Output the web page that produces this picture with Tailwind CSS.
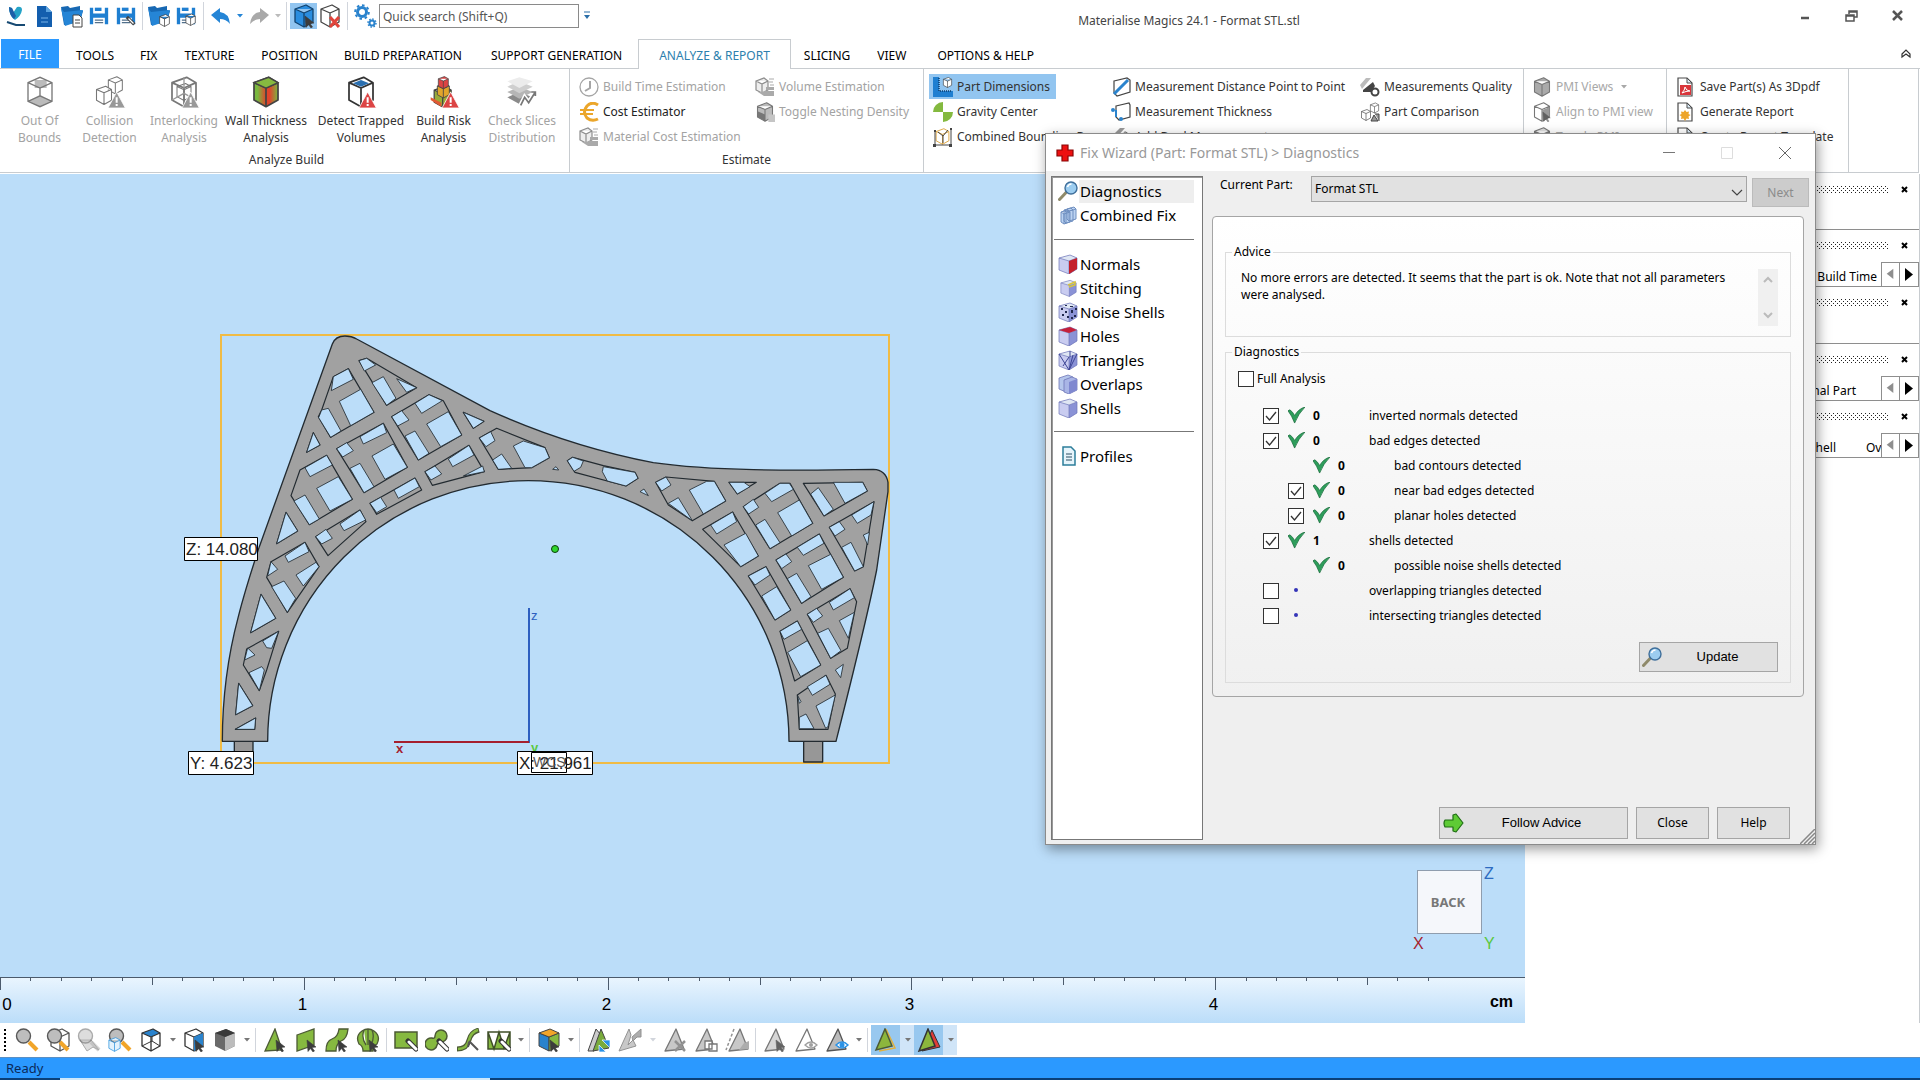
<!DOCTYPE html>
<html lang="en">

<head>
    <meta charset="UTF-8">
    <title>Materialise Magics 24.1 - Format STL.stl</title>
    <script src="https://cdn.jsdelivr.net/npm/@tailwindcss/browser@4"></script>
</head>

<body class="font-['Noto_Sans',sans-serif] text-xs text-[#222]">

    <!-- Icon sprite -->
    <svg width="0" height="0" class="absolute">
        <defs>
            <linearGradient id="green" x1="0" x2="1"><stop offset=".15" stop-color="#7ab83f" /><stop offset=".5" stop-color="#e0442c" /><stop offset=".65" stop-color="#e0442c" /><stop offset="1" stop-color="#7ab83f" /></linearGradient>
            <pattern id="dots" width="4" height="4" patternUnits="userSpaceOnUse"><path d="M0 0h1v1h-1zM2 2h1v1h-1z" fill="#222" /></pattern>
            <symbol id="cursor" viewBox="0 0 24 24"><path d="M13 12l9 7-4 .5 2.500 3.500-1.500 1-2.500-3.500-2.500 3z" fill="#3c3c3c" stroke="#3c3c3c" stroke-width=".6" /></symbol>
            <symbol id="warn" viewBox="0 0 24 24"><path d="M17 12l6.500 12h-13z" fill="currentColor" stroke="#fff" stroke-width=".6" /><path d="M17 16v4M17 21v1.500" stroke="#fff" stroke-width="1.500" /></symbol>
            <symbol id="wire" viewBox="0 0 24 24"><path d="M3 5l11-4 7 4v13l-9 5-9-5zM3 5l9 4 9-4M12 9v14" stroke="currentColor" stroke-width="1.300" stroke-linejoin="round" /></symbol>
            <symbol id="save" viewBox="0 0 24 24"><path d="M1 2h4v7h14V2h4v20h-4v-8H5v8H1z" fill="#1f7fd1" /><path d="M7 2h8v4H7z" fill="#1f7fd1" /><path d="M7 17h10M7 20h10" stroke="#52708c" stroke-width="1.500" /></symbol>
            <symbol id="folder" viewBox="0 0 24 24"><path d="M1 3l7-1 2 2 10-2v4l3 1-3 11-16 3z" fill="#1768b3" /><path d="M1 4l3 4 19-2-3 11-15 5z" fill="#2585d6" /></symbol>
            <symbol id="lens" viewBox="0 0 24 24"><path d="M14 14l8 8" stroke="#f1a529" stroke-width="4" /><circle cx="8.500" cy="8" r="7" fill="#bdbdbd" stroke="#585858" stroke-width="1.400" /></symbol>
            <symbol id="tri" viewBox="0 0 24 24"><path d="M13 1l8 20-19 2z" stroke="#555" stroke-width="1.300" stroke-linejoin="round" /></symbol>
            <symbol id="pen" viewBox="0 0 24 24"><path d="M14 13l8 8" stroke="#333" stroke-width="5" stroke-linecap="round" /><path d="M15 14l7 7" stroke="#fff" stroke-width="3" stroke-linecap="round" /></symbol>
            <symbol id="vbox" viewBox="0 0 20 20"><path d="M1 4l11-3 7 3v11l-8 5-10-4z" fill="#c9ccf0" /><path d="M11 7l8-3v11l-8 5z" fill="#8a92d6" /><path d="M1 4l11-3 7 3-8 3z" fill="#dfe6f3" /><path d="M1 4l11-3 7 3v11l-8 5-10-4zM1 4l10 3 8-3M11 7v13" fill="none" stroke="#6f76b8" stroke-width=".7" /></symbol>
            <symbol id="ok" viewBox="0 0 18 18"><path d="M0 4l2-1q3 2 5 6Q11 2 18 0 11 7 7 17 4 9 0 4z" fill="#2e9e5b" stroke="#1c6e3e" stroke-width=".8" /></symbol>
            <symbol id="tick" viewBox="0 0 16 16"><path d="M3 8l3.500 4L13 4" fill="none" stroke="#333" stroke-width="1.300" /></symbol>
            <symbol id="down" viewBox="0 0 12 6"><path d="M4 1h6L7 4.500z" fill="currentColor" /></symbol>
            <symbol id="qbox" viewBox="0 0 20 20"><path d="M1 4l8-3 4 3v9l-6 3-6-3zM1 4l6 3 6-3M7 7v9" fill="#eee" stroke="#8d8d8d" stroke-width="1.200" /><path d="M11 10h8v3h-8zM9 14h10v5H9zM3 15l6 4v-4z" fill="#aaa" /><path d="M14 2h5M14 5h4M15 8h4" stroke="#aaa" /></symbol>
            <symbol id="page" viewBox="0 0 20 20"><path d="M3 1h9l5 5v13H3z" fill="#fff" stroke="#4a4a4a" stroke-width="1.200" /><path d="M12 1v5h5z" fill="#dcecf8" stroke="#4a4a4a" /></symbol>
            <symbol id="magnify" viewBox="0 0 20 20"><path d="M1.500 18.500l7-7.500" stroke="#8f8a6a" stroke-width="3" stroke-linecap="round" /><circle cx="13" cy="7" r="6" fill="#9ccdf0" stroke="#3f6f9b" stroke-width="1.400" /><path d="M9.500 6q1-3 4-3" stroke="#fff" fill="none" stroke-width="1.500" /></symbol>
        </defs>
    </svg>

    <div class="relative flex h-screen flex-col overflow-hidden bg-white">

        <!-- Title bar -->
        <header class="relative flex h-[39px] shrink-0 items-start pt-1">
            <div class="flex h-6 items-center pl-1">
                <svg class="mr-1 size-6" viewBox="0 0 24 24" fill="none"><path d="M5 3l3 1 1 5 4-6q5-1 5 3-1 6-7 10-6-4-6-13z" fill="#25a3c7" /><path d="M5 3q0 8 5 12l2-3-4-8z" fill="#1d5fa8" /><path d="M3 18l9 3h9" stroke="#174a73" stroke-width="2" /></svg>
                <button aria-label="New" class="mr-1 size-6"><svg viewBox="0 0 24 24"><path d="M5 2h9l6 6v15H5z" fill="#135eae" /><path d="M14 2v6h6z" fill="#5ba3e0" /><path d="M9 14h7M9 18h7" stroke="#78b2e8" /></svg></button>
                <button aria-label="Open" class="mr-[3px] size-6"><svg viewBox="0 0 24 24"><use href="#folder" /><path d="M13 11h6l3 3v9h-9z" fill="#fff" stroke="#444" /><path d="M15 16h5M15 19h5" stroke="#444" /></svg></button>
                <button aria-label="Save" class="mr-[3px] size-6 p-[2px]"><svg viewBox="0 0 24 24"><use href="#save" /></svg></button>
                <button aria-label="Save as" class="size-6 p-[2px]"><svg viewBox="0 0 24 24"><use href="#save" /><path d="M13 13l9 9" stroke="#444" stroke-width="4" /><path d="M15 15l6 6" stroke="#fff" stroke-width="1.500" /></svg></button>
                <span class="mx-1 h-7 w-px bg-gray-300"></span>
                <button aria-label="Open project" class="mr-[3px] size-6"><svg viewBox="0 0 24 24" fill="#fff"><use href="#folder" /><g class="text-[#333]"><use href="#wire" x="11" y="10" width="13" height="13" /></g></svg></button>
                <button aria-label="Save project" class="size-6 p-[2px]"><svg viewBox="0 0 24 24" fill="#fff"><use href="#save" /><g class="text-[#333]"><use href="#wire" x="10" y="9" width="15" height="15" /></g></svg></button>
                <span class="mx-[5px] h-7 w-px bg-gray-300"></span>
                <button aria-label="Undo" class="size-6"><svg viewBox="0 0 24 24"><path d="M2 11l9-7v4q9 1 10 12-4-5-10-5v4z" fill="#2585d6" /></svg></button>
                <svg class="h-2 w-3 text-[#2585d6]"><use href="#down" /></svg>
                <button aria-label="Redo" class="ml-[2px] size-6"><svg viewBox="0 0 24 24"><path d="M22 11l-9-7v4Q4 9 3 20q4-5 10-5v4z" fill="#a9a9a9" /></svg></button>
                <svg class="h-2 w-3 text-[#bbb]"><use href="#down" /></svg>
                <span class="mx-[3px] h-7 w-px bg-gray-300"></span>
                <button aria-label="Select" class="flex h-[26px] w-[27px] items-center justify-center bg-[#92c5f0]"><svg class="size-6 text-[#12436f]" viewBox="0 0 24 24" fill="#2a8ddf"><use href="#wire" /><use href="#cursor" /></svg></button>
                <button aria-label="Unselect" class="ml-px size-6"><svg class="text-[#444]" viewBox="0 0 24 24" fill="#fff"><use href="#wire" /><path d="M12 13l9 10M21 13l-9 10" stroke="#e1443b" stroke-width="3" /></svg></button>
                <span class="mx-[5px] h-7 w-px bg-gray-300"></span>
                <button aria-label="Settings" class="mr-[2px] size-6"><svg viewBox="0 0 24 24" fill="none" stroke="#2a83cd"><circle cx="9" cy="8" r="4.500" stroke-width="3" /><circle cx="9" cy="8" r="6.800" stroke-width="2" stroke-dasharray="2.600 2.700" /><circle cx="19" cy="19" r="2.500" stroke-width="2" /><circle cx="19" cy="19" r="4" stroke-width="1.500" stroke-dasharray="1.500 1.600" /></svg></button>
                <input type="text" aria-label="Quick search" placeholder="Quick search (Shift+Q)" class="h-6 w-[200px] border border-[#8a8a8a] bg-white px-[3px] text-xs placeholder:text-[#555]">
                <svg class="ml-[2px] h-3 w-3" viewBox="0 0 12 12"><path d="M3 2h6" stroke="#2a6ea8" /><path d="M3 5h6L6 9z" fill="#2a6ea8" /></svg>
            </div>
            <h1 class="absolute inset-x-0 top-3 ml-[458px] text-center text-xs leading-[18px] text-[#444]">Materialise Magics 24.1 - Format STL.stl</h1>
            <div class="absolute top-1 right-[11px] flex gap-[22px] text-[#555]">
                <button aria-label="Minimize" class="size-6"><svg viewBox="0 0 24 24"><path d="M8 14h8" stroke="currentColor" stroke-width="2.500" /></svg></button>
                <button aria-label="Restore" class="size-6"><svg viewBox="0 0 24 24" fill="none" stroke="currentColor" stroke-width="1.500"><path d="M10 10V7h8v6h-3M7 11h8v6H7zM7 12h8M10 8h8" /></svg></button>
                <button aria-label="Close window" class="size-6"><svg viewBox="0 0 24 24"><path d="M8 7l9 9M17 7l-9 9" stroke="currentColor" stroke-width="2.500" /></svg></button>
            </div>
        </header>

        <!-- Ribbon tabs -->
        <nav class="flex h-[30px] shrink-0 items-stretch border-b border-[#c8ccd0] text-xs text-black">
            <a href="#" class="ml-px flex w-[58px] items-center justify-center bg-[#2b99ff] pt-[2px] text-white">FILE</a>
            <a href="#" class="ml-1 flex items-center px-[13px] pt-1">TOOLS</a>
            <a href="#" class="flex items-center px-[13px] pt-1">FIX</a>
            <a href="#" class="flex items-center px-[14px] pt-1">TEXTURE</a>
            <a href="#" class="flex items-center px-[13px] pt-1">POSITION</a>
            <a href="#" class="flex items-center px-[13px] pt-1">BUILD PREPARATION</a>
            <a href="#" class="flex items-center px-4 pt-1">SUPPORT GENERATION</a>
            <a href="#" class="-mb-px flex items-center border border-b-0 border-[#c8ccd0] bg-white px-5 pt-[3px] text-[#2d7fae]">ANALYZE &amp; REPORT</a>
            <a href="#" class="flex items-center px-[13px] pt-1">SLICING</a>
            <a href="#" class="flex items-center px-[14px] pt-1">VIEW</a>
            <a href="#" class="flex items-center px-[17px] pt-1">OPTIONS &amp; HELP</a>
            <button aria-label="Collapse ribbon" class="mr-[6px] ml-auto size-4 self-center"><svg viewBox="0 0 16 16" fill="none" stroke="#333" stroke-width="1.200"><path d="M4 8l4-4 4 4v3l-4-3-4 3z" /></svg></button>
        </nav>

        <!-- Ribbon -->
        <section class="mr-px flex h-[104px] shrink-0 border-r border-b border-[#c8ccd0] text-[#333]">
            <div class="flex w-[570px] shrink-0 flex-col border-r border-[#c8ccd0] pt-[7px] text-center leading-[17px]">
                <div class="flex pl-[7px]">
                    <button disabled class="flex w-[65px] flex-col items-center text-[#a3a3a3]"><svg class="mb-1 size-8 text-[#666]" viewBox="0 0 24 24" fill="none"><path d="M8 3h9v6H8z" fill="#bbb" /><path d="M3 19l9-5 9 5-9 4z" fill="#bbb" /><path d="M3 5l9-4 9 4v14l-9 4-9-4zM3 5l9 4 9-4M12 9v6M3 19l9-4 9 4" stroke="#777" /></svg>Out Of<br>Bounds</button>
                    <button disabled class="flex w-[75px] flex-col items-center text-[#a3a3a3]"><svg class="mb-1 size-8 text-[#777]" viewBox="0 0 24 24" fill="#fff"><use href="#wire" x="9" y="0" width="14" height="14" /><use href="#wire" x="0" y="7" width="15" height="15" /><g class="text-[#999]"><use href="#warn" /></g></svg>Collision<br>Detection</button>
                    <button disabled class="flex w-[74px] flex-col items-center text-[#a3a3a3]"><svg class="mb-1 size-8 text-[#777]" viewBox="0 0 24 24" fill="none"><use href="#wire" /><use href="#wire" x="5" y="5" width="14" height="14" /><path d="M12 1v8M3 18l9-5 9 5" stroke="#999" /><g class="text-[#999]"><use href="#warn" /></g></svg>Interlocking<br>Analysis</button>
                    <button class="flex w-[90px] flex-col items-center"><svg class="mb-1 size-8 text-[#444]" viewBox="0 0 24 24" fill="url(#green)"><use href="#wire" /><path d="M3 5l11-4 7 4-9 4z" fill="#86b940" stroke="#444" /></svg>Wall Thickness<br>Analysis</button>
                    <button class="flex w-[100px] flex-col items-center"><svg class="mb-1 size-8 text-[#333]" viewBox="0 0 24 24" fill="#fff"><use href="#wire" /><path d="M6 5.500l6-2.500 6 2.500-6 2.500z" fill="#2a6fb0" /><g class="text-[#dc4444]"><use href="#warn" /></g></svg>Detect Trapped<br>Volumes</button>
                    <button class="flex w-[65px] flex-col items-center"><svg class="mb-1 size-8 text-[#444]" viewBox="0 0 24 24"><g fill="#9aab38"><use href="#wire" x="-1" y="7" width="24" height="17" /></g><g fill="#e2a52b"><use href="#wire" x="3" y="5" width="17" height="12" /></g><g fill="#dc4444"><use href="#wire" x="6" y="0" width="11" height="10" /></g><path d="M2 18l8 5v-3l-8-4z" fill="#e05a33" /><g class="text-[#dc4444]"><use href="#warn" /></g></svg>Build Risk<br>Analysis</button>
                    <button disabled class="flex w-[92px] flex-col items-center text-[#a3a3a3]"><svg class="mb-1 size-8" viewBox="0 0 24 24"><path d="M1 16l9-4 10 4-10 5z" fill="#8a8a8a" /><path d="M1 12l9-4 10 4-10 5z" fill="#b5b5b5" /><path d="M1 8l9-4 10 4-10 5z" fill="#cfcfcf" /><path d="M1 4l9-3 10 3-10 5z" fill="#ececec" /><path d="M11 22l3-6 3 4 5-8" stroke="#fff" stroke-width="3.500" fill="none" /><path d="M11 22l3-6 3 4 5-8M19 12h3v3" stroke="#777" fill="none" stroke-width="1.300" /></svg>Check Slices<br>Distribution</button>
                </div>
                <h2 class="mt-[5px] pl-1">Analyze Build</h2>
            </div>

            <div class="flex w-[354px] shrink-0 flex-col border-r border-[#c8ccd0] pt-[5px] text-[#a3a3a3]">
                <div class="flex pl-[9px]">
                    <div class="flex w-[176px] flex-col">
                        <button disabled class="flex h-[25px] items-center gap-1 whitespace-nowrap"><svg class="size-5" viewBox="0 0 20 20" fill="none" stroke="#a5a5a5" stroke-width="1.300"><circle cx="10" cy="10" r="9" /><path d="M11 4v7l-5 3" stroke-width="2" /></svg>Build Time Estimation</button>
                        <button class="flex h-[25px] items-center gap-1 whitespace-nowrap text-[#222]"><svg class="size-5" viewBox="0 0 20 20" fill="none" stroke="#eba62b" stroke-width="3"><path d="M19 3Q13-1 8 4q-5 6 0 12 5 4 11 1" /><path d="M1 8h14M1 12h13" stroke-width="2" /></svg>Cost Estimator</button>
                        <button disabled class="flex h-[25px] items-center gap-1 whitespace-nowrap"><svg class="size-5"><use href="#qbox" /></svg>Material Cost Estimation</button>
                    </div>
                    <div class="flex flex-col">
                        <button disabled class="flex h-[25px] items-center gap-1 whitespace-nowrap"><svg class="size-5"><use href="#qbox" /></svg>Volume Estimation</button>
                        <button disabled class="flex h-[25px] items-center gap-1 whitespace-nowrap"><svg class="size-5 text-[#777]" viewBox="0 0 24 24" fill="#bbb"><use href="#wire" /><path d="M3 11l9 4v8l-9-5z" fill="#777" /><path d="M16 15h8v9h-8z" fill="#c5c5c5" /></svg>Toggle Nesting Density</button>
                    </div>
                </div>
                <h2 class="mt-[2px] text-center leading-[17px] text-[#333]">Estimate</h2>
            </div>

            <div class="flex w-[600px] shrink-0 border-r border-[#c8ccd0] pt-[5px] pl-[5px]">
                <div class="flex w-[178px] flex-col items-start">
                    <button class="flex h-[25px] items-center gap-1 bg-[#92c5f0] pr-[6px] pl-1 whitespace-nowrap"><svg class="size-5" viewBox="0 0 20 20" fill="#fff"><path d="M0 0h6v14h14v6H0z" fill="#1f7fd1" /><path d="M6 1v13h13" stroke="#0d3d6b" stroke-width="1.500" stroke-dasharray="1 1" fill="none" /><g class="text-[#333]"><use href="#wire" x="9" y="0" width="11" height="11" /></g></svg>Part Dimensions</button>
                    <button class="flex h-[25px] items-center gap-1 pl-1 whitespace-nowrap"><svg class="size-5" viewBox="0 0 20 20" fill="#84b93f"><path d="M10 0v10H0A10 10 0 0 1 10 0zM10 10h10a10 10 0 0 1-10 10z" transform="matrix(-1 0 0 1 20 0) rotate(90 10 10)" /></svg>Gravity Center</button>
                    <button class="flex h-[25px] items-center gap-1 pl-1 whitespace-nowrap"><svg class="size-5 text-[#dba23c]" viewBox="0 0 20 20" fill="none"><use href="#wire" x="1" y="1" width="17" height="17" /><path d="M2 18V4M2 18h16M18 18V2M5 5l5 4 5-6M10 9v7" stroke="#444" /><path d="M0 17h3v3H0zM16 17h3v3h-3zM17 1h2v2h-2zM1 3h2v2H1z" fill="#444" /></svg>Combined Bounding Box</button>
                </div>
                <div class="flex w-[249px] flex-col items-start pl-1">
                    <button class="flex h-[25px] items-center gap-1 whitespace-nowrap"><svg class="size-5" viewBox="0 0 20 20" fill="none"><path d="M3 4l13-3 3 2v12L6 19l-3-3z" fill="#fff" stroke="#444" stroke-width="1.200" /><path d="M3 17L17 3" stroke="#2a83cd" stroke-width="3" /></svg>Measurement Distance Point to Point</button>
                    <button class="flex h-[25px] items-center gap-1 whitespace-nowrap"><svg class="size-5" viewBox="0 0 20 20" fill="none"><path d="M5 4l13-3 1 2v12L8 18l-3-3z" fill="#fff" stroke="#444" stroke-width="1.200" /><path d="M5 8v7" stroke="#2a83cd" stroke-width="2" /><circle cx="2" cy="8" r="2" fill="#2a83cd" /><circle cx="10" cy="17" r="2" fill="#2a83cd" /></svg>Measurement Thickness</button>
                    <button class="flex h-[25px] items-center gap-1 whitespace-nowrap"><svg class="size-5" viewBox="0 0 20 20"><path d="M1 9L9 1h5L3 13zM5 14l9-10 3 2-8 11z" fill="#999" /><path d="M16 5l-7 8 8 4z" fill="#444" /></svg>Add Dual Measurement</button>
                </div>
                <div class="flex flex-col items-start pl-1">
                    <button class="flex h-[25px] items-center gap-1 whitespace-nowrap"><svg class="size-5" viewBox="0 0 20 20"><path d="M0 8L6 1h5L2 12z" fill="#bbb" /><path d="M3 13L13 5l2 4-4 6H3z" fill="#444" /><circle cx="15" cy="15" r="3.500" fill="#fff" stroke="#444" stroke-width="2" /></svg>Measurements Quality</button>
                    <button class="flex h-[25px] items-center gap-1 whitespace-nowrap"><svg class="size-5 text-[#444]" viewBox="0 0 20 20" fill="#fff"><use href="#wire" x="9" y="0" width="11" height="12" /><use href="#wire" x="0" y="7" width="12" height="12" /><path d="M11 19l3-6 4 6zM15 12h4v7" stroke="#444" fill="#999" /></svg>Part Comparison</button>
                </div>
            </div>

            <div class="flex w-[143px] shrink-0 flex-col items-start border-r border-[#c8ccd0] pt-[5px] pl-2 text-[#a8a8a8]">
                <button disabled class="flex h-[25px] items-center gap-1 whitespace-nowrap"><svg class="size-5 text-[#777]" viewBox="0 0 24 24" fill="#aaa"><use href="#wire" /></svg>PMI Views <svg class="h-2 w-3"><use href="#down" /></svg></button>
                <button disabled class="flex h-[25px] items-center gap-1 whitespace-nowrap"><svg class="size-5 text-[#777]" viewBox="0 0 24 24" fill="#fff"><use href="#wire" /><path d="M12 10l9-4v12l-9 5z" fill="#999" /><use href="#cursor" opacity=".6" /></svg>Align to PMI view</button>
                <button disabled class="flex h-[25px] items-center gap-1 whitespace-nowrap"><svg class="size-5 text-[#777]" viewBox="0 0 24 24" fill="#ddd"><use href="#wire" /></svg>Toggle PMI</button>
            </div>

            <div class="flex w-[182px] shrink-0 flex-col items-start border-r border-[#c8ccd0] pt-[5px] pl-2">
                <button class="flex h-[25px] items-center gap-[5px] whitespace-nowrap"><svg class="size-5" viewBox="0 0 20 20"><use href="#page" /><path d="M5 8h11v10H5z" fill="#d9363b" /><path d="M7 16q3-3 3-6 1 4 5 4-4 0-8 2" stroke="#fff" fill="none" /></svg>Save Part(s) As 3Dpdf</button>
                <button class="flex h-[25px] items-center gap-[5px] whitespace-nowrap"><svg class="size-5" viewBox="0 0 20 20"><use href="#page" /><path d="M10 8l1.500 2 2.500-.500-.500 2.500 2 1-2 1.500.500 2.500-2.500-.500L10 19l-1.500-2.500-2.500.500.500-2.500-2-1.500 2-1L6 9.500l2.500.500z" fill="#eda52a" /></svg>Generate Report</button>
                <button class="flex h-[25px] items-center gap-[5px] whitespace-nowrap"><svg class="size-5"><use href="#page" /></svg>Create Report Template</button>
            </div>
        </section>

        <!-- Workspace -->
        <div class="mt-px flex min-h-0 flex-1">
            <main class="relative flex min-w-0 flex-1 flex-col bg-[#bbddf9]">
                <svg class="min-h-0 w-full flex-1 font-['Liberation_Sans',sans-serif]" font-size="17">
                    <g transform="translate(0 -174)" fill="none">
                        <rect x="221" y="335" width="668" height="428" stroke="#f0bb45" stroke-width="2" />

                        <!-- Arch body -->
                        <g transform="translate(170 320) scale(.33333)" stroke="#222a30" stroke-width="4" stroke-linejoin="round">
                            <path d="M193 1262h56v64h-56zM1901 1262h57v64h-57z" fill="#979797" />
                            <path d="M157 1264Q157 1070 205 890 225 810 268 680L487 72Q496 48 525 48 545 48 560 57Q760 165 960 272Q1200 380 1450 428Q1570 445 1750 449Q1900 452 2110 448 2148 450 2154 487V515L2120 750Q2090 900 1998 1264H1857A782 782 0 0 0 293 1264Z" fill="#a1a1a1" />
                            <path stroke-width="3.500" d="M567 122L590 115 740 203 650 256ZM490 170L535 146 612 277 482 352 445 290 455 270ZM430 338L450 375 410 397ZM665 290L777 224 820 242 875 345 745 420ZM880 277L942 304 910 325ZM500 386L640 310 712 442 582 518ZM928 354L980 325 1125 383 1138 413 1085 443 985 448ZM765 455L897 376 943 455 787 496ZM390 450L470 406 547 538 418 614 363 527ZM348 577L383 633 320 671ZM600 550L735 474 755 510 620 583ZM437 650L570 570 588 605 474 707ZM303 725L405 667 447 740 352 877 290 772ZM273 823L317 895 242 938ZM230 987L326 934 290 1050 268 1112 220 1035ZM206 1090L248 1157 197 1184ZM196 1228L257 1194 254 1228Z" />
                            <path fill="#bbddf9" stroke-width="2.500" d="M567 122L590 115 617 135 583 153ZM640 170L678 235 650 256 606 188ZM680 176L740 203 710 217ZM490 170L535 146 550 178 484 212ZM572 208L612 277 542 317 508 244ZM475 265L513 333 482 352 446 293 455 270ZM430 338L450 375 410 397ZM665 290L695 272 717 300 683 318ZM735 250L777 224 817 242 755 280ZM835 275L875 345 812 380 770 312ZM735 333L777 400 745 420 705 348ZM880 277L942 304 910 325ZM500 386L530 368 550 392 518 411ZM570 350L640 310 650 338 580 372ZM670 372L712 442 645 478 606 408ZM570 430L612 500 582 518 540 445ZM928 354L962 335 975 362 948 380ZM1060 363L1125 383 1138 413 1085 443 1065 443 1030 378ZM995 402L1025 445 985 448 968 420ZM765 455L795 438 815 462 783 480ZM835 417L897 376 912 405 848 440ZM880 468L938 438 943 455ZM405 443L470 406 487 435 420 470ZM505 470L547 538 480 573 440 505ZM405 525L448 597 418 614 372 543ZM348 577L383 633 320 671ZM600 550L632 532 650 560 620 578ZM672 510L735 474 748 500 685 535ZM437 650L468 628 487 655 455 672ZM510 612L570 570 587 600 522 632ZM303 725L323 748 293 768ZM345 708L405 667 417 695 355 727ZM438 727L447 740 400 798 378 765ZM342 783L377 835 352 877 305 800ZM273 823L317 895 242 938ZM233 984L255 1005 224 1020ZM278 963L326 934 305 985 290 983ZM275 1040L283 1050 268 1112 237 1058ZM206 1090L248 1157 197 1184ZM196 1228L257 1194 254 1228Z" />
                        </g>
                        <g transform="translate(520 420) scale(.33333)" stroke="#222a30" stroke-width="3.500" stroke-linejoin="round">
                            <path d="M142 122L158 112 250 137 345 157 354 175 318 198 165 157ZM407 187L438 171 583 184 617 243 517 302 445 255ZM627 187H709L652 222ZM548 328L638 276 715 408 662 440ZM670 260L780 190H810L878 310 750 386ZM850 190L1028 187 1042 213 912 288ZM928 322L1062 245 1030 440 1004 453ZM685 468L738 440 812 570 765 600ZM768 420L898 342 970 472 845 550ZM780 634L832 603 902 735 824 783ZM862 583L990 506 1010 545 982 685 932 715ZM832 825L918 766 946 822 924 928H838Z" />
                            <path fill="#bbddf9" stroke-width="2.500" d="M98 148L108 140 116 150ZM142 122L158 112 190 123 182 142 162 154ZM250 140L345 157 354 175 318 198 262 183 247 155ZM360 215L372 207 385 227ZM407 187L438 171 453 195 425 213ZM508 210L560 184H583L617 243 550 282ZM475 233L517 302 445 250ZM627 187H672L690 200 652 222ZM572 315L638 276 650 305 590 342ZM677 340L715 408 662 440 612 375ZM670 260L700 238 716 262 686 282ZM735 220L780 190H808L820 208 755 245ZM838 240L878 310 815 348 773 278ZM735 298L780 368 750 386 707 315ZM940 187H1028L1042 213 975 250ZM895 203L940 268 912 288 872 222ZM928 322L958 305 975 328 945 348ZM995 285L1062 245 1053 285 1012 310ZM1030 345L1048 337 1043 375ZM993 367L1030 440 1004 453 965 382ZM685 468L738 440 750 465 705 495ZM770 500L812 570 765 600 725 528ZM768 420L798 402 815 425 785 446ZM832 382L898 342 912 370 850 406ZM932 403L970 472 905 508 865 437ZM830 460L873 530 845 550 802 476ZM780 634L832 603 845 628 792 658ZM862 662L902 735 842 770 803 697ZM862 583L890 565 908 588 880 607ZM928 547L990 506 1003 533 940 570ZM958 602L1003 577 985 655ZM925 625L963 692 932 715 893 640ZM970 733L962 773 946 750ZM862 800L918 766 930 793 877 826ZM946 825L924 920 917 925 888 858ZM858 882L882 926H838V892ZM832 825L843 845 838 850Z" />
                        </g>

                        <!-- Axes and dimension labels -->
                        <path d="M529 608v135" stroke="#2d5fc0" stroke-width="2" />
                        <path d="M394 742h135" stroke="#a51f2e" stroke-width="2" />
                        <g font-weight="bold" font-size="13">
                            <text x="531" y="620" fill="#2d5fc0" font-weight="normal">z</text>
                            <text x="396" y="753" fill="#a51f2e">x</text>
                            <text x="531" y="752" fill="#59c83f">y</text>
                        </g>
                        <circle cx="555" cy="549" r="3.500" fill="#2fd62f" stroke="#0b3d0b" />
                        <g fill="#fff" stroke="#000">
                            <path d="M184.500 537.500h73v23h-73zM188.500 751.500h65v23h-65zM517.500 751.500h75v23h-75z" />
                            <path d="M531.500 752.500h35v20h-35z" fill="none" />
                        </g>
                        <g fill="#222">
                            <text x="186" y="555">Z: 14.080</text>
                            <text x="190" y="769">Y: 4.623</text>
                            <text x="519" y="769">X: 21.961</text>
                            <text x="533" y="767" font-size="14" fill="#555">WCS</text>
                        </g>
                    </g>
                </svg>

                <!-- View cube -->
                <div class="absolute right-[29px] bottom-[70px] grid grid-cols-[65px_12px] gap-x-[2px] font-['Liberation_Sans',sans-serif] text-base leading-[19px]">
                    <div class="flex h-16 items-center justify-center border border-[#8f9dae] bg-[#f5f7fb] pr-[3px] font-['Noto_Sans',sans-serif] text-[13px] font-bold text-[#777]">BACK</div>
                    <span class="-mt-[6px] text-[#2d6bc0]">Z</span>
                    <span class="-ml-1 text-[#a51f2e]">X</span>
                    <span class="text-[#59c83f]">Y</span>
                </div>

                <svg id="ruler" class="h-[46px] w-full shrink-0 bg-linear-to-b from-[#eaf5fe] to-[#bbddf9] font-['Liberation_Sans',sans-serif]" font-size="17">
                    <path d="M0 .5h4000" stroke="#4b5a6c" />
                    <text x="100%" y="30" dx="-12" text-anchor="end" font-size="16" font-weight="bold">cm</text>
                </svg>
            </main>

            <!-- Tool sheets -->
            <aside class="w-[395px] shrink-0 border-r border-[#c8ccd0]">
                <div class="h-[56px] border-b border-[#8e8e8e] pt-[11px] pr-[10px]">
                    <div class="flex items-center gap-[11px]"><svg class="h-[7px] flex-1"><rect width="100%" height="7" fill="url(#dots)" /></svg><button aria-label="Close sheet" class="size-[9px]"><svg viewBox="0 0 9 9"><path d="M2 2l5 5M7 2L2 7" stroke="#000" stroke-width="2" /></svg></button></div>
                </div>
                <div class="flex h-[57px] flex-col border-b border-[#8e8e8e] pt-[11px]">
                    <div class="flex items-center gap-[11px] pr-[10px]"><svg class="h-[7px] flex-1"><rect width="100%" height="7" fill="url(#dots)" /></svg><button aria-label="Close sheet" class="size-[9px]"><svg viewBox="0 0 9 9"><path d="M2 2l5 5M7 2L2 7" stroke="#000" stroke-width="2" /></svg></button></div>
                    <div class="mt-auto flex h-6 items-end justify-end"><span class="mr-1 leading-[18px] text-black">Build Time</span>
                        <button aria-label="Previous tab" class="h-6 w-[19px] border border-b-0 border-[#8e8e8e]"><svg viewBox="0 0 18 24"><path d="M12 6v11L5 11.500z" fill="#8e8e8e" /></svg></button><button aria-label="Next tab" class="h-6 w-[19px] border border-b-0 border-l-0 border-[#8e8e8e]"><svg viewBox="0 0 18 24"><path d="M5 5v13l8-6.500z" fill="#000" /></svg></button>
                    </div>
                </div>
                <div class="h-[57px] border-b border-[#8e8e8e] pt-[11px] pr-[10px]">
                    <div class="flex items-center gap-[11px]"><svg class="h-[7px] flex-1"><rect width="100%" height="7" fill="url(#dots)" /></svg><button aria-label="Close sheet" class="size-[9px]"><svg viewBox="0 0 9 9"><path d="M2 2l5 5M7 2L2 7" stroke="#000" stroke-width="2" /></svg></button></div>
                </div>
                <div class="flex h-[57px] flex-col border-b border-[#8e8e8e] pt-[11px]">
                    <div class="flex items-center gap-[11px] pr-[10px]"><svg class="h-[7px] flex-1"><rect width="100%" height="7" fill="url(#dots)" /></svg><button aria-label="Close sheet" class="size-[9px]"><svg viewBox="0 0 9 9"><path d="M2 2l5 5M7 2L2 7" stroke="#000" stroke-width="2" /></svg></button></div>
                    <div class="mt-auto flex h-6 items-end justify-end"><span class="mr-[25px] leading-[18px] text-black">Final Part</span>
                        <button aria-label="Previous tab" class="h-6 w-[19px] border border-b-0 border-[#8e8e8e]"><svg viewBox="0 0 18 24"><path d="M12 6v11L5 11.500z" fill="#8e8e8e" /></svg></button><button aria-label="Next tab" class="h-6 w-[19px] border border-b-0 border-l-0 border-[#8e8e8e]"><svg viewBox="0 0 18 24"><path d="M5 5v13l8-6.500z" fill="#000" /></svg></button>
                    </div>
                </div>
                <div class="flex h-[57px] flex-col border-b border-[#8e8e8e] pt-[11px]">
                    <div class="flex items-center gap-[11px] pr-[10px]"><svg class="h-[7px] flex-1"><rect width="100%" height="7" fill="url(#dots)" /></svg><button aria-label="Close sheet" class="size-[9px]"><svg viewBox="0 0 9 9"><path d="M2 2l5 5M7 2L2 7" stroke="#000" stroke-width="2" /></svg></button></div>
                    <div class="mt-auto flex h-6 items-end justify-end"><span class="mr-[30px] leading-[18px] text-black">Shell</span><span class="w-[15px] overflow-hidden leading-[18px] text-black">Overlap</span>
                        <button aria-label="Previous tab" class="h-6 w-[19px] border border-b-0 border-[#8e8e8e]"><svg viewBox="0 0 18 24"><path d="M12 6v11L5 11.500z" fill="#8e8e8e" /></svg></button><button aria-label="Next tab" class="h-6 w-[19px] border border-b-0 border-l-0 border-[#8e8e8e]"><svg viewBox="0 0 18 24"><path d="M5 5v13l8-6.500z" fill="#000" /></svg></button>
                    </div>
                </div>
            </aside>
        </div>

        <!-- Bottom toolbar -->
        <div class="flex h-[34px] shrink-0 items-center text-[#777]">
            <svg class="ml-1 h-6 w-[7px]"><path d="M1 1v23" stroke="#000" stroke-width="2" stroke-dasharray="2 2" /></svg>
            <button aria-label="Zoom" class="flex w-[31px] justify-center"><svg class="size-6"><use href="#lens" /></svg></button>
            <button aria-label="Zoom part" class="flex w-[31px] justify-center"><svg class="size-6 text-[#555]" viewBox="0 0 24 24" fill="none"><use href="#wire" x="2" /><use href="#lens" /></svg></button>
            <button aria-label="Unzoom" class="flex w-[31px] justify-center"><svg class="size-6" viewBox="0 0 24 24"><path d="M3 12l7 11 6-4 6 3-8-10z" fill="#ddd" stroke="#aaa" /><use href="#lens" class="opacity-50 grayscale" /></svg></button>
            <button aria-label="Zoom all" class="flex w-[31px] justify-center"><svg class="size-6 text-[#3a9ae0]" viewBox="0 0 24 24" fill="#e4f2fc"><use href="#lens" /><use href="#wire" y="9" x="-1" width="15" height="15" /></svg></button>
            <button aria-label="View" class="flex w-[31px] justify-center"><svg class="size-6 text-[#333]" viewBox="0 0 24 24" fill="none"><path d="M3 5l11-4 7 4-9 4z" fill="#2a83cd" /><use href="#wire" /><path d="M3 18l10-5 8 5M13 9v4" stroke="#333" /></svg></button>
            <svg class="h-[6px] w-3"><use href="#down" /></svg>
            <button aria-label="Front view" class="flex w-[31px] justify-center"><svg class="size-6 text-[#333]" viewBox="0 0 24 24" fill="#fff"><use href="#wire" /><path d="M12 9l9-4v13l-9 5z" fill="#2a83cd" /><use href="#cursor" /></svg></button>
            <button aria-label="Shading" class="flex w-[31px] justify-center"><svg class="size-6" viewBox="0 0 24 24"><path d="M2 5l11-4 9 4v13l-10 5-10-5z" fill="#6a6a6a" /><path d="M12 9l10-4v13l-10 5z" fill="#bcbcbc" /><path d="M2 5l11-4 9 4-10 4z" fill="#3a3a3a" /></svg></button>
            <svg class="h-[6px] w-3"><use href="#down" /></svg>
            <span class="mx-[3px] h-6 w-px bg-gray-300"></span>
            <button aria-label="Mark triangle" class="flex w-[31px] justify-center"><svg class="size-6" viewBox="0 0 24 24" fill="#86b940"><path d="M12 1l7 21-17 1z" stroke="#4c5a35" stroke-width="1.300" /><use href="#cursor" /></svg></button>
            <button aria-label="Mark plane" class="flex w-[31px] justify-center"><svg class="size-6" viewBox="0 0 24 24" fill="#86b940"><path d="M3 7l17-6v16L3 23z" stroke="#4c5a35" stroke-width="1.300" /><use href="#cursor" /></svg></button>
            <button aria-label="Mark surface" class="flex w-[31px] justify-center"><svg class="size-6" viewBox="0 0 24 24" fill="#86b940"><path d="M14 1h9q-1 10-7 12-5 3-5 10H1q0-10 6-12 6-2 7-10z" stroke="#4c5a35" stroke-width="1.300" /><use href="#cursor" /></svg></button>
            <button aria-label="Mark shell" class="flex w-[31px] justify-center"><svg class="size-6" viewBox="0 0 24 24" fill="#86b940"><path d="M7 23q0-5-4-7-4-8 3-13 6-4 12 0 7 5 3 13-4 2-4 7zM8 2q-3 8 2 15M12 1v16M16 2q3 7-1 15" stroke="#4c5a35" stroke-width="1.300" /><use href="#cursor" /></svg></button>
            <span class="mx-[3px] h-6 w-px bg-gray-300"></span>
            <button aria-label="Rectangle marking" class="flex w-[31px] justify-center"><svg class="size-6" viewBox="0 0 24 24"><path d="M1 4h22v16H1z" fill="#86b940" stroke="#4c5a35" stroke-width="1.500" /><use href="#pen" /></svg></button>
            <button aria-label="Freeform marking" class="flex w-[31px] justify-center"><svg class="size-6" viewBox="0 0 24 24"><path d="M10 8a6 6 0 1 1 6 6q-3 0-4 3a6 6 0 1 1-5-7q3 1 3-2z" fill="#86b940" stroke="#4c5a35" stroke-width="1.500" /><use href="#pen" /></svg></button>
            <button aria-label="Brush marking" class="flex w-[31px] justify-center"><svg class="size-6" viewBox="0 0 24 24" fill="none"><path d="M1 21q10 0 12-9 2-8 10-10" stroke="#4c5a35" stroke-width="5" /><path d="M2 21q9 0 11-9 2-8 9-10" stroke="#86b940" stroke-width="2.500" /><path d="M13 13l9 9M13 14l-1 5" stroke="#555" stroke-width="2" /></svg></button>
            <button aria-label="Mark triangles" class="flex w-[31px] justify-center"><svg class="size-6" viewBox="0 0 24 24"><path d="M1 4h22v17H1zM1 4l6 17 5-17 5 16 6-16" fill="#86b940" stroke="#3f4f28" stroke-width="1.500" /><use href="#pen" /></svg></button>
            <svg class="h-[6px] w-3"><use href="#down" /></svg>
            <span class="mx-[3px] h-6 w-px bg-gray-300"></span>
            <button aria-label="Color" class="flex w-[31px] justify-center"><svg class="size-6" viewBox="0 0 24 24" stroke="#444"><path d="M2 5l10 4v14L2 18z" fill="#2a83cd" /><path d="M12 9l10-4v13l-10 5z" fill="#86b940" /><path d="M2 5l11-4 9 4-10 4z" fill="#f1a529" /><use href="#cursor" /></svg></button>
            <svg class="h-[6px] w-3"><use href="#down" /></svg>
            <span class="mx-[3px] h-6 w-px bg-gray-300"></span>
            <button aria-label="Invert marked" class="flex w-[31px] justify-center"><svg class="size-6" viewBox="0 0 24 24" stroke="#444"><path d="M9 1L1 23h6l7-16z" fill="#ccc" /><path d="M14 1l8 19-16 3z" fill="#79ab3c" /><path d="M15 12h8v8zM12 17v7h7z" fill="#2a92e6" stroke="#fff" stroke-width=".7" /></svg></button>
            <button aria-label="Expand marked" class="flex w-[31px] justify-center opacity-80"><svg class="size-6" viewBox="0 0 24 24" stroke="#777"><path d="M11 1L1 23l17-5-3-6-5 5 3-10z" fill="#bbb" /><path d="M14 9l9-8v8h-4l-4 4z" fill="#999" /></svg></button>
            <svg class="h-[6px] w-[14px] text-gray-300"><use href="#down" /></svg>
            <button aria-label="Delete marked" class="flex w-[31px] justify-center opacity-80"><svg class="size-6" viewBox="0 0 24 24" fill="#bbb"><use href="#tri" /><path d="M12 13l10 10M22 13L12 23" stroke="#777" stroke-width="2.500" /></svg></button>
            <button aria-label="Copy marked" class="flex w-[31px] justify-center opacity-80"><svg class="size-6" viewBox="0 0 24 24" fill="#bbb"><use href="#tri" /><path d="M11 13h7v8h-7zM15 16h8v7h-8z" fill="#fff" stroke="#555" stroke-width="1.300" /></svg></button>
            <button aria-label="Separate marked" class="flex w-[31px] justify-center opacity-80"><svg class="size-6" viewBox="0 0 24 24" fill="#bbb"><path d="M9 1L1 22" stroke="#777" stroke-width="1.500" stroke-dasharray="3 2" /><use href="#tri" x="2" /><path d="M14 22l5-7 5-2v8z" fill="#999" /></svg></button>
            <span class="mx-[3px] h-6 w-px bg-gray-300"></span>
            <button aria-label="Select marked" class="flex w-[31px] justify-center opacity-80"><svg class="size-6" viewBox="0 0 24 24" fill="#ccc"><use href="#tri" /><use href="#cursor" /></svg></button>
            <button aria-label="Hide marked" class="flex w-[31px] justify-center opacity-80"><svg class="size-6" viewBox="0 0 24 24" fill="#fff"><use href="#tri" /><path d="M11 17q6-6 12 0-6 6-12 0z" stroke="#888" stroke-width="1.300" /><circle cx="17" cy="17" r="2" fill="#888" /></svg></button>
            <button aria-label="Show marked" class="flex w-[31px] justify-center"><svg class="size-6" viewBox="0 0 24 24" fill="#bbb"><use href="#tri" /><path d="M11 17q6-6 12 0-6 6-12 0z" fill="#fff" stroke="#2a92e6" stroke-width="1.500" /><circle cx="17" cy="17" r="2.500" fill="#2a92e6" /></svg></button>
            <svg class="h-[6px] w-3"><use href="#down" /></svg>
            <span class="mx-[3px] h-6 w-px bg-gray-300"></span>
            <div class="flex h-[30px] items-center bg-[#d0e5f8]">
                <button aria-label="Triangle visibility" class="flex h-full w-[29px] items-center justify-center bg-[#98c8ef]"><svg class="size-6" viewBox="0 0 24 24" fill="#8cb63d"><path d="M12 1l9 19-16 3" fill="none" stroke="#e2b13c" stroke-width="1.500" /><path d="M11 1l7 17-16 4z" stroke="#4c5a35" stroke-width="1.500" /></svg></button>
                <svg class="h-[6px] w-[14px]"><use href="#down" /></svg>
                <button aria-label="Back face color" class="flex h-full w-[29px] items-center justify-center bg-[#98c8ef]"><svg class="size-6" viewBox="0 0 24 24"><path d="M15 2l8 17-18 4z" fill="#e03c37" stroke="#333" /><path d="M11 1l7 17-16 5z" fill="#8cb63d" stroke="#333" stroke-width="1.500" /></svg></button>
                <svg class="h-[6px] w-[14px]"><use href="#down" /></svg>
            </div>
        </div>

        <footer class="flex h-[23px] shrink-0 flex-col bg-[#2b99ff] text-[#0b2a5a]">
            <p class="border-t border-[#5a8fc4] pt-px pl-[6px] text-[13px] leading-[19px]">Ready</p>
            <div class="mt-auto flex h-[2px] bg-[#0a3f78]"><span class="ml-[60px] w-[430px] bg-[#cfe8fb]"></span></div>
        </footer>

        <!-- Fix wizard -->
        <div role="dialog" aria-label="Fix Wizard" class="absolute top-[133px] right-[104px] flex h-[712px] w-[771px] flex-col border border-[#8b8b8b] bg-[#efefef] text-black shadow-[2px_4px_12px_rgba(0,0,0,0.4)]">
            <div class="flex h-[37px] shrink-0 items-center bg-white pl-[10px]">
                <svg class="mr-[6px] size-[18px]" viewBox="0 0 18 18"><path d="M6 1h6v5h5v6h-5v5H6v-5H1V6h5z" fill="#ee1010" stroke="#8a0606" stroke-width="1.200" /></svg>
                <h2 class="text-sm text-[#999]">Fix Wizard (Part: Format STL) &gt; Diagnostics</h2>
                <div class="mr-[22px] ml-auto flex gap-[42px]">
                    <button aria-label="Minimize wizard" class="size-4"><svg viewBox="0 0 16 16"><path d="M2 7.500h12" stroke="#777" /></svg></button>
                    <button aria-label="Maximize wizard" class="size-4"><svg viewBox="0 0 16 16"><path d="M2.500 2.500h11v11h-11z" fill="none" stroke="#ddd" /></svg></button>
                    <button aria-label="Close wizard" class="size-4"><svg viewBox="0 0 16 16"><path d="M2 2l12 12M14 2L2 14" stroke="#666" /></svg></button>
                </div>
            </div>

            <div class="flex min-h-0 flex-1 pb-1">
                <nav class="mt-[5px] ml-[5px] flex w-[152px] shrink-0 flex-col border border-[#777] bg-white pt-[2px] pl-[2px] text-[15px] shadow-[inset_1px_1px_0_#999]">
                    <a href="#" class="flex h-6 items-center gap-px pl-1"><svg class="size-5"><use href="#magnify" /></svg><span class="mr-2 flex-1 bg-[#eee] pl-px leading-[23px]">Diagnostics</span></a>
                    <a href="#" class="flex h-6 items-center gap-[2px] pl-1"><svg class="size-5" viewBox="0 0 20 20" fill="#bcd3f2" stroke="#6f8fc0"><path d="M9 4l7-2 2 2v10l-7 2-2-2zM9 4l2 2 7-2M11 6v10M6 5l7-2 2 2v11l-7 2-2-2zM6 5l2 2 7-2M8 7v11M3 7l6-2 3 2v10l-6 2-3-2zM3 7l3 2 6-2M6 9v10" /></svg>Combined Fix</a>
                    <hr class="mt-3 mr-2 mb-3 border-[#777]">
                    <a href="#" class="flex h-6 items-center gap-[2px] pl-1"><svg class="size-5" viewBox="0 0 20 20"><use href="#vbox" /><path d="M11 7l8-3v11l-8 5z" fill="#c4202b" /></svg>Normals</a>
                    <a href="#" class="flex h-6 items-center gap-[2px] pl-1"><svg class="size-5" viewBox="0 0 20 20"><use href="#vbox" x="2" width="17" /><path d="M10 7l7-3v3l-6 2" fill="none" stroke="#d9c53c" stroke-width="1.500" /></svg>Stitching</a>
                    <a href="#" class="flex h-6 items-center gap-[2px] pl-1"><svg class="size-5" viewBox="0 0 20 20"><use href="#vbox" /><path d="M3 6h2v2H3zM7 9h2v2H7zM4 12h2v2H4zM9 14h2v2H9zM13 8h2v3h-2zM16 13h2v2h-2zM13 15h2v2h-2zM17 6h2v2h-2zM7 3h2v1H7zM12 4h3v1h-3z" fill="#20284e" /></svg>Noise Shells</a>
                    <a href="#" class="flex h-6 items-center gap-[2px] pl-1"><svg class="size-5" viewBox="0 0 20 20"><use href="#vbox" /><path d="M1 4l11-3 7 3-8 3z" fill="#c4203b" /></svg>Holes</a>
                    <a href="#" class="flex h-6 items-center gap-[2px] pl-1"><svg class="size-5" viewBox="0 0 20 20"><use href="#vbox" /><path d="M1 4l10 16 8-16M11 7l-6 9M12 1v6M11 20l4-15" fill="none" stroke="#3c4493" /></svg>Triangles</a>
                    <a href="#" class="flex h-6 items-center gap-[2px] pl-1"><svg class="size-5" viewBox="0 0 20 20"><path d="M1 4l9-3 5 2v12l-7 3-7-3z" fill="#b5c6ec" stroke="#6f76b8" stroke-width=".8" /><path d="M6 6l8-3 5 2v11l-8 4-5-2z" fill="#a9b5e6" stroke="#6f76b8" stroke-width=".8" /><path d="M11 8l8-3v11l-8 4z" fill="#7f88d0" /></svg>Overlaps</a>
                    <a href="#" class="flex h-6 items-center gap-[2px] pl-1"><svg class="size-5"><use href="#vbox" /></svg>Shells</a>
                    <hr class="mt-[11px] mr-2 mb-3 border-[#777]">
                    <a href="#" class="flex h-6 items-center gap-[2px] pl-1"><svg class="size-5" viewBox="0 0 20 20"><path d="M5 1h8l4 4v14H5z" fill="#e6f4fb" stroke="#2d7d9a" stroke-width="1.500" /><path d="M8 8h6M8 11h6M8 14h6" stroke="#2b4f63" /></svg>Profiles</a>
                </nav>

                <div class="flex min-w-0 flex-1 flex-col pr-1 pl-[9px]">
                    <div class="flex pt-[5px]">
                        <label for="part" class="w-[99px] pl-2 leading-[18px]">Current Part:</label>
                        <div class="grid flex-1">
                            <select id="part" class="col-start-1 row-start-1 h-[26px] appearance-none border border-[#a5a5a5] bg-[#e1e1e1] pl-[3px] text-xs"><option>Format STL</option></select>
                            <svg class="pointer-events-none col-start-1 row-start-1 mr-1 size-3 self-center justify-self-end" viewBox="0 0 12 12"><path d="M1 4l5 5 5-5" fill="none" stroke="#444" stroke-width="1.200" /></svg>
                        </div>
                        <button disabled class="mt-[2px] mr-[2px] ml-[5px] h-[29px] w-[57px] border border-[#bbb] bg-[#ccc] text-[#8b8b8b]">Next</button>
                    </div>

                    <div class="mt-[9px] mr-[7px] flex h-[481px] flex-col rounded-[4px] border border-[#a5a5a5] bg-linear-to-b from-white to-[#f0f0f0] px-[12px] pt-[26px]">
                        <fieldset class="h-[94px] border border-[#dcdcdc] pl-[6px]">
                            <legend class="px-[2px] leading-[18px]">Advice</legend>
                            <div class="flex pt-[8px] pr-[12px] pl-[9px]">
                                <p class="flex-1 leading-[17px] whitespace-nowrap">No more errors are detected. It seems that the part is ok. Note that not all parameters<br>were analysed.</p>
                                <div class="flex h-[57px] w-5 flex-col items-center justify-between bg-[#f0f0f0] py-1">
                                    <svg class="size-3" viewBox="0 0 12 12"><path d="M2 9l4-4 4 4" fill="none" stroke="#bbb" stroke-width="2" /></svg>
                                    <svg class="size-3" viewBox="0 0 12 12"><path d="M2 3l4 4 4-4" fill="none" stroke="#bbb" stroke-width="2" /></svg>
                                </div>
                            </div>
                        </fieldset>

                        <fieldset class="mt-[6px] h-[340px] border border-[#dcdcdc] pl-[6px]">
                            <legend class="px-[2px] leading-[18px]">Diagnostics</legend>
                            <label class="flex items-center gap-[3px] pt-[9px] pl-[6px] leading-[18px]"><input type="checkbox" class="size-4 appearance-none border border-[#333] bg-white">Full Analysis</label>
                            <div class="mt-[15px] flex flex-col pl-[31px] leading-[25px]">
                                <label class="flex h-[25px] items-center"><span class="grid w-[25px]"><input type="checkbox" checked class="col-start-1 row-start-1 size-4 appearance-none border border-[#333] bg-white"><svg class="pointer-events-none col-start-1 row-start-1 size-4"><use href="#tick" /></svg></span><svg class="size-[17px]"><use href="#ok" /></svg><b class="w-16 pl-2">0</b>inverted normals detected</label>
                                <label class="flex h-[25px] items-center"><span class="grid w-[25px]"><input type="checkbox" checked class="col-start-1 row-start-1 size-4 appearance-none border border-[#333] bg-white"><svg class="pointer-events-none col-start-1 row-start-1 size-4"><use href="#tick" /></svg></span><svg class="size-[17px]"><use href="#ok" /></svg><b class="w-16 pl-2">0</b>bad edges detected</label>
                                <div class="flex h-[25px] items-center pl-[50px]"><svg class="size-[17px]"><use href="#ok" /></svg><b class="w-16 pl-2">0</b>bad contours detected</div>
                                <label class="flex h-[25px] items-center pl-[25px]"><span class="grid w-[25px]"><input type="checkbox" checked class="col-start-1 row-start-1 size-4 appearance-none border border-[#333] bg-white"><svg class="pointer-events-none col-start-1 row-start-1 size-4"><use href="#tick" /></svg></span><svg class="size-[17px]"><use href="#ok" /></svg><b class="w-16 pl-2">0</b>near bad edges detected</label>
                                <label class="flex h-[25px] items-center pl-[25px]"><span class="grid w-[25px]"><input type="checkbox" checked class="col-start-1 row-start-1 size-4 appearance-none border border-[#333] bg-white"><svg class="pointer-events-none col-start-1 row-start-1 size-4"><use href="#tick" /></svg></span><svg class="size-[17px]"><use href="#ok" /></svg><b class="w-16 pl-2">0</b>planar holes detected</label>
                                <label class="flex h-[25px] items-center"><span class="grid w-[25px]"><input type="checkbox" checked class="col-start-1 row-start-1 size-4 appearance-none border border-[#333] bg-white"><svg class="pointer-events-none col-start-1 row-start-1 size-4"><use href="#tick" /></svg></span><svg class="size-[17px]"><use href="#ok" /></svg><b class="w-16 pl-2">1</b>shells detected</label>
                                <div class="flex h-[25px] items-center pl-[50px]"><svg class="size-[17px]"><use href="#ok" /></svg><b class="w-16 pl-2">0</b>possible noise shells detected</div>
                                <label class="flex h-[25px] items-center"><input type="checkbox" class="mr-[9px] size-4 appearance-none border border-[#333] bg-white"><svg class="mr-16 size-[17px]"><circle cx="8" cy="8" r="2" fill="#3434b8" /></svg>overlapping triangles detected</label>
                                <label class="flex h-[25px] items-center"><input type="checkbox" class="mr-[9px] size-4 appearance-none border border-[#333] bg-white"><svg class="mr-16 size-[17px]"><circle cx="8" cy="8" r="2" fill="#3434b8" /></svg>intersecting triangles detected</label>
                            </div>
                            <button class="mt-[14px] mr-[12px] ml-auto flex h-[30px] w-[139px] items-center border border-[#a5a5a5] bg-[#e1e1e1] pl-[2px] font-['Liberation_Sans',sans-serif] text-[13px]"><svg class="size-5"><use href="#magnify" /></svg><span class="flex-1 pr-1">Update</span></button>
                        </fieldset>
                    </div>

                    <div class="mt-auto mr-[21px] mb-px flex justify-end gap-2">
                        <button class="flex h-8 w-[189px] items-center border border-[#a5a5a5] bg-[#e1e1e1] pl-[3px] font-['Liberation_Sans',sans-serif] text-[13px]"><svg class="size-[21px]" viewBox="0 0 21 21"><path d="M2 7h8V2l3-1 7 9-7 9-3-1v-4H2q-2-4 0-7z" fill="#5ecb35" stroke="#1f6d14" stroke-width="1.200" stroke-linejoin="round" /></svg><span class="flex-1 pr-2">Follow Advice</span></button>
                        <button class="h-8 w-[73px] border border-[#a5a5a5] bg-[#e1e1e1] text-xs">Close</button>
                        <button class="h-8 w-[73px] border border-[#a5a5a5] bg-[#e1e1e1] text-xs">Help</button>
                    </div>
                </div>
            </div>
            <svg class="absolute right-0 bottom-0 size-[15px]" viewBox="0 0 15 15"><path d="M0 15L15 0M4 15L15 4M8 15l7-7M12 15l3-3" stroke="#888" stroke-width="1.500" /></svg>
        </div>
    </div>

    <script>
        // Ruler: one centimetre is 303.8px, ticks every millimetre
        const ruler = document.getElementById('ruler');
        const NS = 'http://www.w3.org/2000/svg';
        const CM = 303.8;

        let d = '';
        for (let i = 0; i <= 47; i++) {
            const x = Math.round(i * CM / 10) + 0.5;
            const len = i % 10 === 0 ? 13 : i % 5 === 0 ? 8 : 4;
            d += `M${x} 0v${len}`;
            if (i % 10 === 0) {
                const label = document.createElementNS(NS, 'text');
                label.setAttribute('x', i === 0 ? 7 : x - 2);
                label.setAttribute('y', 33);
                label.setAttribute('text-anchor', 'middle');
                label.textContent = i / 10;
                ruler.appendChild(label);
            }
        }
        const ticks = document.createElementNS(NS, 'path');
        ticks.setAttribute('d', d);
        ticks.setAttribute('stroke', '#4b5a6c');
        ruler.appendChild(ticks);
    </script>
</body>

</html>
